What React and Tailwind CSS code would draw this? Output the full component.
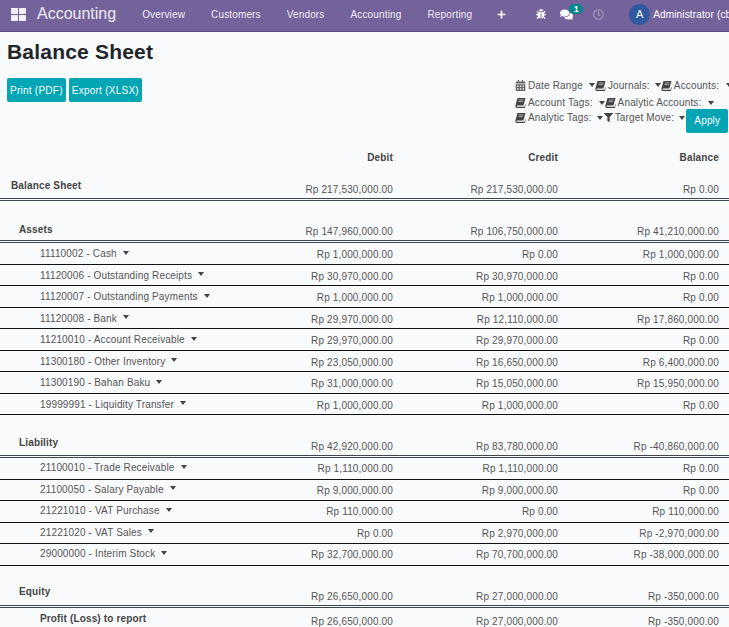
import React from "react";
import { FaThLarge, FaBug, FaComments, FaRegClock, FaPlus, FaFilter, FaCalendarAlt } from "react-icons/fa";

const BookIcon = ({ className }) => (
  <svg viewBox="0 0 12 12" className={className}>
    <path d="M3.2 1h8.3l-2.3 8.2H2.6c-.7 0-1 .4-.9.8.1.4.5.7 1 .7h7.7l1-3.2.4.6-1.1 3.9H2.6C1.4 12 .4 11.200.4 10c0-.4.1-.8.2-1.200L2.400 2.200C2.500 1.500 2.700 1 3.200 1z" fill="currentColor" />
    <path d="M4.200 3.200h5M3.700 5h5" stroke="#f9fafc" strokeWidth="0.6" />
  </svg>
);

const FunnelIcon = ({ className }) => (
  <span className={`${className} flex items-center justify-center`}>
    <FaFilter className="w-[9px] h-[9px]" />
  </span>
);

const Caret = () => (
  <span className="inline-block align-middle w-0 h-0 border-x-[3.5px] border-x-transparent border-t-[4px] border-t-[#444]" />
);

const Filter = ({ icon: Icon, label, gap = "ml-[7px]", iconClass = "text-[#444]", iconGap = "mr-[2px]" }) => (
  <span className="inline-flex items-center whitespace-nowrap shrink-0">
    <Icon className={`${iconClass} w-[11px] h-[11px] ${iconGap} shrink-0`} />
    <span>{label}</span>
    <span className={`${gap} flex items-center`}><Caret /></span>
  </span>
);

const Amounts = ({ d, c, b }) => (
  <>
    <div className="w-[164px] shrink-0 text-right">{d}</div>
    <div className="w-[165px] shrink-0 text-right">{c}</div>
    <div className="w-[161px] shrink-0 text-right">{b}</div>
  </>
);

const Section = ({ label, d, c, b, h, indent = "pl-[19px]", lift = "pb-[3px]" }) => (
  <div className={`flex items-end ${h} border-b-[3px] border-double border-[#3f4650] pr-[10px] text-[#555]`}>
    <div className={`flex-1 ${indent} font-bold text-[#444] ${lift}`}>{label}</div>
    <div className="flex pb-[1px]"><Amounts d={d} c={c} b={b} /></div>
  </div>
);

const Row = ({ label, d, c, b, lower }) => (
  <div className="flex h-[21.5px] items-center border-b border-[#111] pr-[10px] text-[#555]">
    <div className={`flex-1 pl-[40px] whitespace-nowrap ${lower ? "pt-[1px]" : "pb-[1px]"}`}>
      {label}
      <span className="ml-[6px] relative top-[-2px]"><Caret /></span>
    </div>
    <div className={`flex ${lower ? "pt-[3px]" : "pt-[1px]"}`}><Amounts d={d} c={c} b={b} /></div>
  </div>
);

const assets = [
  ["11110002 - Cash", "Rp 1,000,000.00", "Rp 0.00", "Rp 1,000,000.00"],
  ["11120006 - Outstanding Receipts", "Rp 30,970,000.00", "Rp 30,970,000.00", "Rp 0.00"],
  ["11120007 - Outstanding Payments", "Rp 1,000,000.00", "Rp 1,000,000.00", "Rp 0.00"],
  ["11120008 - Bank", "Rp 29,970,000.00", "Rp 12,110,000.00", "Rp 17,860,000.00"],
  ["11210010 - Account Receivable", "Rp 29,970,000.00", "Rp 29,970,000.00", "Rp 0.00"],
  ["11300180 - Other Inventory", "Rp 23,050,000.00", "Rp 16,650,000.00", "Rp 6,400,000.00"],
  ["11300190 - Bahan Baku", "Rp 31,000,000.00", "Rp 15,050,000.00", "Rp 15,950,000.00"],
  ["19999991 - Liquidity Transfer", "Rp 1,000,000.00", "Rp 1,000,000.00", "Rp 0.00"],
];

const liabilities = [
  ["21100010 - Trade Receivable", "Rp 1,110,000.00", "Rp 1,110,000.00", "Rp 0.00"],
  ["21100050 - Salary Payable", "Rp 9,000,000.00", "Rp 9,000,000.00", "Rp 0.00"],
  ["21221010 - VAT Purchase", "Rp 110,000.00", "Rp 0.00", "Rp 110,000.00"],
  ["21221020 - VAT Sales", "Rp 0.00", "Rp 2,970,000.00", "Rp -2,970,000.00"],
  ["29000000 - Interim Stock", "Rp 32,700,000.00", "Rp 70,700,000.00", "Rp -38,000,000.00"],
];

const Rows = ({ data, lower }) =>
  data.map((r) => <Row key={r[0]} label={r[0]} d={r[1]} c={r[2]} b={r[3]} lower={lower} />);

const navItems = ["Overview", "Customers", "Vendors", "Accounting", "Reporting"];

export default function App() {
  return (
    <div className="w-[729px] h-[627px] overflow-hidden bg-[#f9fafc] font-['Liberation_Sans',Arial,sans-serif] text-[10px] tracking-[0.15px]">
      <header className="flex items-center h-[32px] pb-[3px] bg-[#74629b] border-b border-[#5c4d80] text-white whitespace-nowrap overflow-hidden">
        <FaThLarge className="ml-[11px] w-[15px] h-[15px] shrink-0 text-[#f3f0f8]" />
        <span className="ml-[11px] text-[16px] tracking-normal text-[#f0edf5] shrink-0">Accounting</span>
        <nav className="flex ml-[26px] gap-[26px] text-[10px] text-[#f0edf5] shrink-0">
          {navItems.map((n) => <span key={n}>{n}</span>)}
        </nav>
        <FaPlus className="ml-[25px] w-[9px] h-[9px] shrink-0" />
        <FaBug className="ml-[30px] w-[10px] h-[10px] shrink-0" />
        <span className="relative ml-[14px] shrink-0">
          <FaComments className="w-[13px] h-[13px]" />
          <span className="absolute left-[9px] top-[-4px] h-[10px] w-[14px] rounded-full bg-[#00868b] text-[9px] font-bold leading-[10px] text-center tracking-normal">1</span>
        </span>
        <FaRegClock className="ml-[20px] w-[11px] h-[11px] shrink-0 text-[#a79ac0]" />
        <span className="ml-[25px] flex items-center justify-center w-[21px] h-[21px] shrink-0 rounded-full bg-[#2f5a9e] text-[11px]">A</span>
        <span className="ml-[3px] shrink-0">Administrator (cb</span>
      </header>

      <h1 className="pl-[7px] pt-[7px] h-[46px] text-[21px] leading-[26px] font-bold text-[#212529] tracking-[0.2px]">Balance Sheet</h1>

      <div className="flex justify-between h-[72px]">
        <div className="flex gap-[3px] pl-[7px] h-[24px] text-white tracking-[0.25px]">
          <button className="px-[3px] h-[24px] rounded-[2px] bg-[#01a5b4]">Print (PDF)</button>
          <button className="px-[3px] h-[24px] rounded-[2px] bg-[#01a5b4]">Export (XLSX)</button>
        </div>
        <div className="w-[214px] shrink-0 text-[#555] whitespace-nowrap">
          <div className="flex h-[14px] items-center">
            <Filter icon={FaCalendarAlt} iconClass="text-[#666]" label="Date Range" gap="ml-[6px]" />
            <Filter icon={BookIcon} label="Journals:" gap="ml-[5px]" />
            <Filter icon={BookIcon} label="Accounts:" />
          </div>
          <div className="flex h-[15px] mt-[3px] items-center">
            <Filter icon={BookIcon} label="Account Tags:" gap="ml-[6px]" />
            <Filter icon={BookIcon} label="Analytic Accounts:" />
          </div>
          <div className="flex h-[15px] items-center">
            <Filter icon={BookIcon} label="Analytic Tags:" gap="ml-[5px]" />
            <Filter icon={FunnelIcon} iconGap="mr-[1px]" label="Target Move:" gap="ml-[5px]" />
            <button className="relative top-[3px] ml-[1px] w-[42px] h-[24px] rounded-[2px] bg-[#01a5b4] text-white shrink-0">Apply</button>
          </div>
        </div>
      </div>

      <div className="flex font-bold text-[#444] h-[25px] pr-[10px]">
        <div className="flex-1" />
        <Amounts d="Debit" c="Credit" b="Balance" />
      </div>

      <Section label="Balance Sheet" indent="pl-[11px]" lift="pb-[5px]" h="h-[26px]" d="Rp 217,530,000.00" c="Rp 217,530,000.00" b="Rp 0.00" />
      <Section label="Assets" h="h-[42px]" d="Rp 147,960,000.00" c="Rp 106,750,000.00" b="Rp 41,210,000.00" />
      <Rows data={assets} lower />
      <Section label="Liability" h="h-[43px]" lift="pb-[5px]" d="Rp 42,920,000.00" c="Rp 83,780,000.00" b="Rp -40,860,000.00" />
      <Rows data={liabilities} />
      <Section label="Equity" h="h-[42px]" lift="pb-[6px]" d="Rp 26,650,000.00" c="Rp 27,000,000.00" b="Rp -350,000.00" />
      <div className="flex h-[26px] items-center pr-[10px] text-[#555]">
        <div className="flex-1 pl-[40px] pb-[5px] font-bold text-[#444]">Profit (Loss) to report</div>
        <div className="flex pt-[1px]"><Amounts d="Rp 26,650,000.00" c="Rp 27,000,000.00" b="Rp -350,000.00" /></div>
      </div>
    </div>
  );
}
